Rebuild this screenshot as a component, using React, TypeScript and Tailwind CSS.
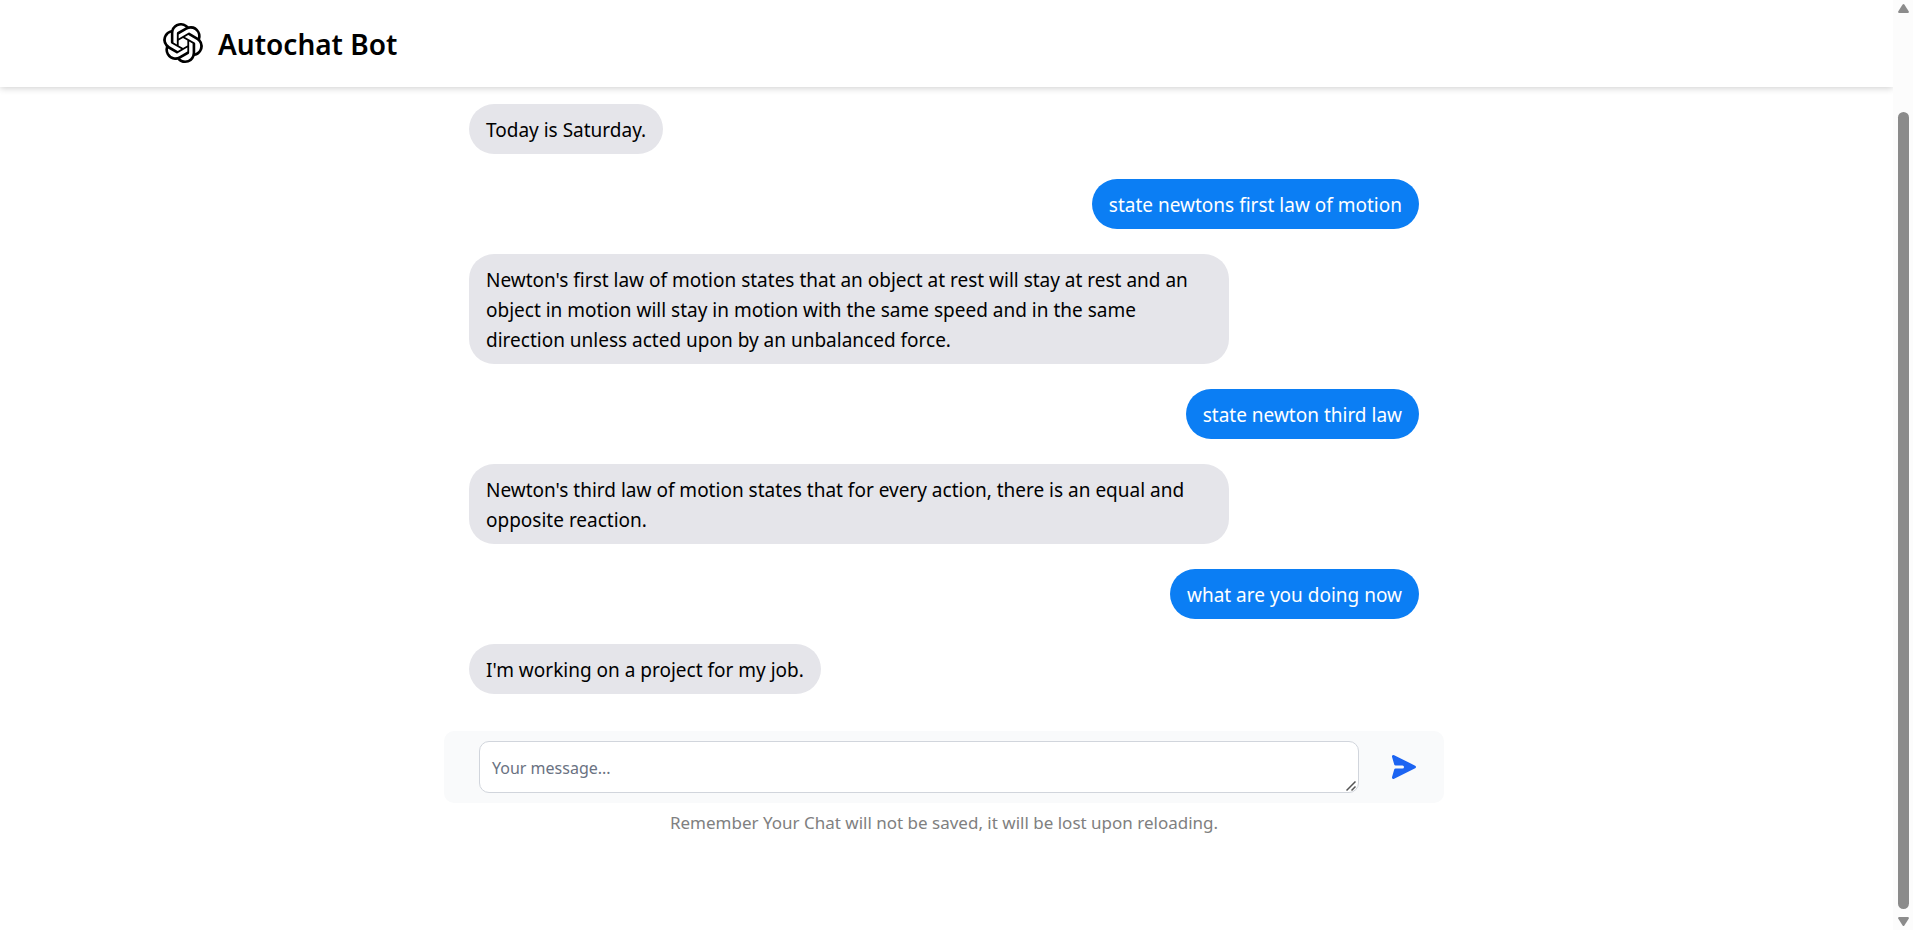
import { SiOpenai } from "react-icons/si";

type Message = { from: "bot" | "user"; text: string };

const messages: Message[] = [
  { from: "bot", text: "Today is Saturday." },
  { from: "user", text: "state newtons first law of motion" },
  {
    from: "bot",
    text: "Newton's first law of motion states that an object at rest will stay at rest and an object in motion will stay in motion with the same speed and in the same direction unless acted upon by an unbalanced force.",
  },
  { from: "user", text: "state newton third law" },
  {
    from: "bot",
    text: "Newton's third law of motion states that for every action, there is an equal and opposite reaction.",
  },
  { from: "user", text: "what are you doing now" },
  { from: "bot", text: "I'm working on a project for my job." },
];

function Header() {
  return (
    <header className="flex h-[87px] shrink-0 items-center gap-[15px] bg-white px-[163px] pb-px shadow-[0_1px_7px_rgba(0,0,0,0.2)]">
      <SiOpenai className="size-10 text-black" aria-hidden="true" />
      <h1 className="pt-px text-[28px] leading-9 font-semibold text-black">Autochat Bot</h1>
    </header>
  );
}

function Bubble({ from, text }: Message) {
  const side =
    from === "user" ? "self-end bg-[#0b7ef4] text-white" : "self-start bg-[#e5e5ea] text-black";
  return (
    <li
      className={`max-w-4/5 rounded-[25px] px-[17px] pt-[11px] pb-[9px] text-[19px] leading-[30px] ${side}`}
    >
      {text}
    </li>
  );
}

function Composer() {
  return (
    <form
      className="flex items-center rounded-[10px] bg-gray-50 py-2.5 pr-[15px] pl-[35px]"
      onSubmit={(e) => e.preventDefault()}
    >
      <div className="relative mr-5 min-w-0 flex-1">
        <textarea
          aria-label="Your message"
          rows={1}
          placeholder="Your message..."
          className="block h-[52px] w-full resize-none rounded-[10px] border border-gray-300 bg-white px-3 pt-[13px] pb-[11px] text-[16px] leading-[26px] placeholder:text-gray-500"
        />
        <svg
          viewBox="0 0 10 10"
          className="pointer-events-none absolute right-[3px] bottom-0.5 size-2.5 fill-none stroke-[#555]"
          strokeWidth="1.5"
          aria-hidden="true"
        >
          <path d="M.5 9.500L9.500.5M5.500 9.500L9.500 5.500" />
        </svg>
      </div>
      <button
        type="submit"
        aria-label="Send message"
        className="flex size-[50px] items-center justify-center rounded-full text-[#1c64f2]"
      >
        <svg viewBox="0 0 20 20" fill="currentColor" className="size-[30px] rotate-90" aria-hidden="true">
          <path d="M10.894 2.553a1 1 0 00-1.788 0l-7 14a1 1 0 001.169 1.409l5-1.429A1 1 0 009 15.571V11a1 1 0 112 0v4.571a1 1 0 00.725.962l5 1.428a1 1 0 001.17-1.408l-7-14z" />
        </svg>
      </button>
    </form>
  );
}

function ScrollTrack() {
  return (
    <div
      className="flex w-5 shrink-0 flex-col items-center bg-[#fcfcfc] py-1 pl-px text-[#8b8b8b]"
      aria-hidden="true"
    >
      <svg viewBox="0 0 11 9" className="h-[9px] w-[11px] fill-current">
        <path d="M4.6.6Q5.500-.4 6.400.6L10.800 7.400Q11.200 9 9.800 9H1.200Q-.2 9 .2 7.400Z" />
      </svg>
      <div className="mt-[99px] mb-2 w-[11px] flex-1 rounded-full bg-[#8b8b8b]" />
      <svg viewBox="0 0 11 9" className="h-[9px] w-[11px] rotate-180 fill-current">
        <path d="M4.6.6Q5.500-.4 6.400.6L10.800 7.400Q11.200 9 9.800 9H1.200Q-.2 9 .2 7.400Z" />
      </svg>
    </div>
  );
}

export default function App() {
  return (
    <div className="flex min-h-screen bg-white font-['Noto_Sans','Open_Sans',sans-serif]">
      <div className="flex min-w-0 flex-1 flex-col">
        <Header />
        <main className="mx-auto w-full max-w-[1005px] pt-[17px] pr-[5px]">
          <ul className="flex flex-col gap-[25px] px-[25px]">
            {messages.map((m) => (
              <Bubble key={m.text} {...m} />
            ))}
          </ul>
          <div className="pt-[37px]">
            <Composer />
          </div>
          <p className="pt-[5px] text-center text-[17px] leading-[30px] text-[#808080]">
            Remember Your Chat will not be saved, it will be lost upon reloading.
          </p>
        </main>
      </div>
      <ScrollTrack />
    </div>
  );
}
